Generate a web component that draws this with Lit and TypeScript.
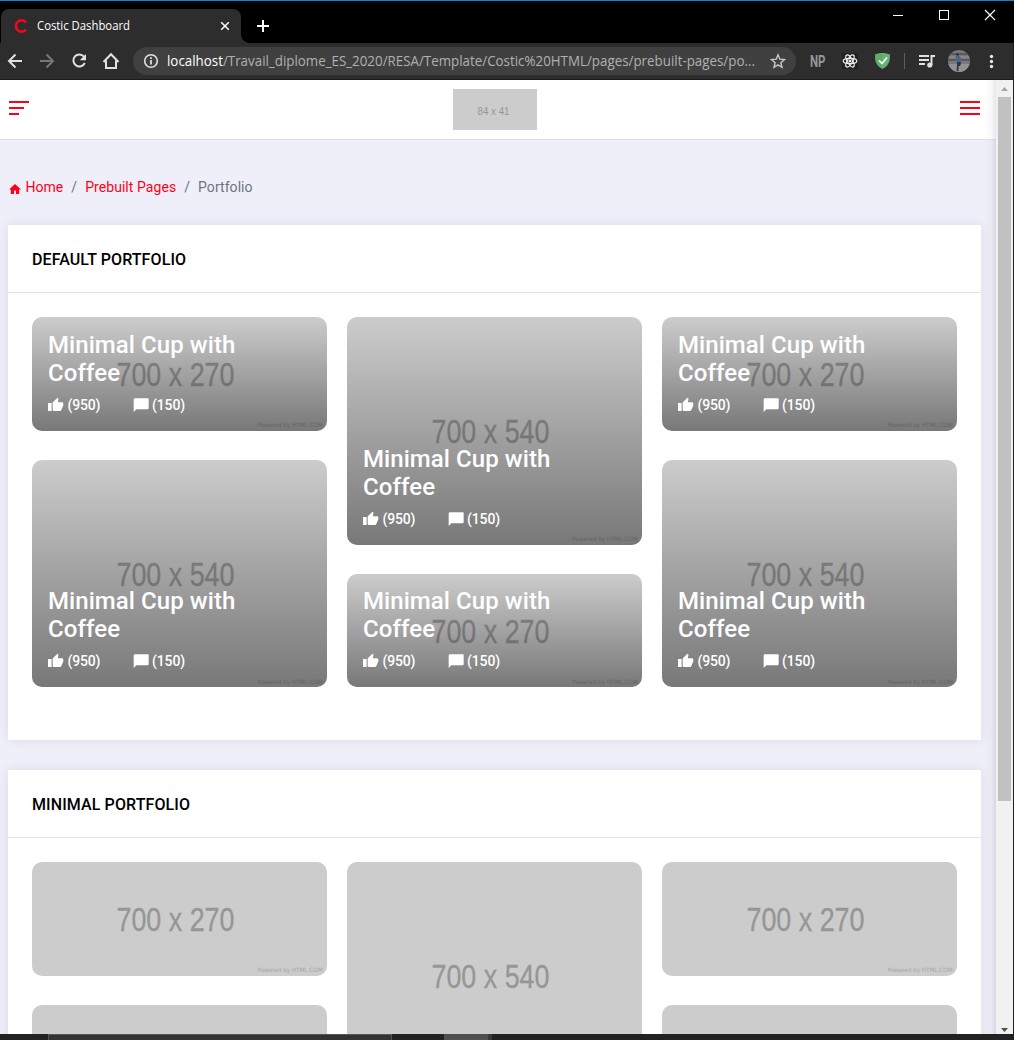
import { LitElement, html, css, svg } from "lit";
import { customElement, property } from "lit/decorators.js";

@customElement("portfolio-tile")
export class PortfolioTile extends LitElement {
  @property({ type: Boolean }) tall = false;
  @property({ type: Boolean }) captioned = false;

  static styles = css`
    :host { display: block; }
    .tile { position: relative; border-radius: 10px; overflow: hidden; background: #ccc; width: 295px; height: 113.8px; }
    .tall { height: 227.57px; }
    .art { display: block; width: 100%; height: 100%; }
    .size { font: 33px "Liberation Sans", sans-serif; fill: #969696; stroke: #969696; stroke-width: .3; }
    .credit { font: 6px "DejaVu Sans", sans-serif; fill: #a6a6a6; }
    .overlay {
      position: absolute; inset: 0; box-sizing: border-box; padding: 0 16px 16px;
      display: flex; flex-direction: column; justify-content: flex-end;
      background: linear-gradient(rgba(0,0,0,0), rgba(0,0,0,.41)); color: #fff;
    }
    .title { margin: 0 0 8px; font: 500 24px/28px Roboto, sans-serif; letter-spacing: .07px; width: 220px; }
    .meta { display: flex; font: 500 14px/20px Roboto, sans-serif; letter-spacing: -.15px; }
    .stat { display: flex; align-items: center; width: 85px; white-space: nowrap; }
    .glyph { width: 16px; height: 16px; margin-right: 3.5px; fill: #fff; flex: none; }
    .stat + .stat { margin-left: -.4px; }
  `;

  render() {
    const h = this.tall ? 227.57 : 113.8;
    const label = this.tall ? "700 x 540" : "700 x 270";
    return html`<div class="tile ${this.tall ? "tall" : ""}">
      <svg class="art" viewBox="0 0 295 ${h}">
        ${svg`<text class="size" x="84.5" y=${h / 2 + 12.5} textLength="118" lengthAdjust="spacingAndGlyphs">${label}</text>
        <text class="credit" x="225.5" y=${h - 3.8} textLength="65" lengthAdjust="spacingAndGlyphs">Powered by HTML.COM</text>`}
      </svg>
      ${this.captioned
        ? html`<div class="overlay">
            <h2 class="title">Minimal Cup with Coffee</h2>
            <div class="meta">
              <span class="stat"><svg class="glyph" viewBox="0 0 24 24"><path d="M23 10a2 2 0 0 0-2-2h-6.320l.96-4.570c.02-.1.030-.21.030-.320 0-.41-.17-.79-.44-1.060L14.170 1 7.590 7.580C7.220 7.950 7 8.450 7 9v10a2 2 0 0 0 2 2h9c.83 0 1.540-.5 1.840-1.220l3.020-7.050c.09-.23.140-.47.140-.73V10M0 21h5.400V9H0v12z"/></svg>(950)</span>
              <span class="stat"><svg class="glyph" viewBox="0 0 24 24"><path d="M22.500 2H3a2 2 0 0 0-2 2v18.500l4-4h17a1.500 1.500 0 0 0 1.500-1.500V3a1 1 0 0 0-1-1z"/></svg>(150)</span>
            </div>
          </div>`
        : ""}
    </div>`;
  }
}

@customElement("portfolio-card")
export class PortfolioCard extends LitElement {
  @property() heading = "";
  @property({ type: Boolean }) captioned = false;

  static styles = css`
    :host { display: block; width: 973px; height: 515px; background: #fff; box-shadow: 0 0 10px rgba(60,50,110,.11); flex: none; }
    .head { height: 65px; border-bottom: 1px solid #e2e3e5; display: flex; align-items: center; padding: 2px 24px 0; }
    .name { margin: 0; font: 500 16px/20px Roboto, sans-serif; letter-spacing: .1px; color: #000; }
    .columns { display: grid; grid-template-columns: repeat(3, 295px); column-gap: 20px; padding: 24px 24px 0; }
    .column { display: flex; flex-direction: column; gap: 29px; }
  `;

  render() {
    const columns = [[false, true], [true, false], [false, true]];
    return html`<div class="head"><h1 class="name">${this.heading}</h1></div>
      <div class="columns">${columns.map(
        (c) => html`<div class="column">${c.map(
          (tall) => html`<portfolio-tile ?tall=${tall} ?captioned=${this.captioned}></portfolio-tile>`
        )}</div>`
      )}</div>`;
  }
}

@customElement("browser-chrome")
export class BrowserChrome extends LitElement {
  static styles = css`
    :host { display: block; height: 80px; background: #000; border-top: 1px solid #1580d3; box-sizing: border-box; font-family: "Open Sans", "Noto Sans", sans-serif; color: #fff; }
    svg { display: block; flex: none; overflow: visible; }
    .line { fill: none; stroke: #dfe1e5; stroke-width: 2; }
    .dim { stroke: #777; }
    .thin { stroke-width: 1.6; }
    .strip { display: flex; height: 42px; padding-left: 1px; }
    .tab { margin-top: 8px; width: 240px; height: 34px; background: #2d2d2d; border-radius: 8px 8px 0 0; display: flex; align-items: center; box-sizing: border-box; padding: 0 11px 0 13px; position: relative; flex: none; }
    .tab::after { content: ""; position: absolute; left: 240px; bottom: 0; width: 8px; height: 8px; background: radial-gradient(circle at 100% 0, transparent 7.5px, #2d2d2d 8px); }
    .label { margin-left: 9px; width: 93px; margin-right: auto; }
    .tabtext { font-size: 12px; fill: #fff; }
    .plus { margin: 19px 0 0 16px; }
    .controls { margin: 9px 19px 0 auto; display: flex; gap: 36px; }
    .bar { height: 37px; background: #2d2d2d; border-bottom: 1px solid #1b1b1b; display: flex; align-items: center; box-sizing: border-box; padding-left: 5px; border-right: 1px solid #1b1b1b; }
    .nav { display: flex; gap: 12px; width: 128px; flex: none; }
    .omni { width: 663px; height: 28px; border-radius: 14px; background: #404040; display: flex; align-items: center; box-sizing: border-box; padding: 0 10px; flex: none; }
    .url { margin-left: 6px; width: 600px; margin-right: auto; }
    .urltext { font-size: 14px; fill: #b0b0b0; }
    .host { fill: #fff; }
    .ext { width: 217px; height: 28px; }
    .np { font-size: 17px; fill: #969696; font-family: Roboto, sans-serif; font-weight: 700; }
  `;

  render() {
    return html`
      <div class="strip">
        <div class="tab">
          <svg width="14" height="16" viewBox="0 0 14 16"><path d="M12 4.400A5.700 5.700 0 1 0 12 11.600" fill="none" stroke="#f5061d" stroke-width="2.600"/></svg>
          <svg class="label" height="18"><text class="tabtext" x="0" y="13" textLength="93" lengthAdjust="spacingAndGlyphs">Costic Dashboard</text></svg>
          <svg width="10" height="10"><path d="M1.200 1.200l7.600 7.600M8.800 1.200l-7.600 7.600" stroke="#fff" stroke-width="1.500"/></svg>
        </div>
        <svg class="plus" width="12" height="12"><path d="M6 0v12M0 6h12" stroke="#fff" stroke-width="2"/></svg>
        <div class="controls">
          <svg width="10" height="10"><path d="M0 5.500h10" stroke="#fff"/></svg>
          <svg width="10" height="10"><rect x=".5" y=".5" width="9" height="9" fill="none" stroke="#fff"/></svg>
          <svg width="10" height="10"><path d="M0 0l10 10M10 0L0 10" stroke="#fff" stroke-width="1.200"/></svg>
        </div>
      </div>
      <div class="bar">
        <div class="nav">
          <svg width="20" height="20"><path class="line" d="M17 10H4.500M10.500 3.500L4 10l6.500 6.500"/></svg>
          <svg width="20" height="20"><path class="line dim" d="M3 10h12.500M9.500 3.500L16 10l-6.500 6.500"/></svg>
          <svg width="20" height="20"><path class="line" d="M15 5.600A6 6 0 1 0 15.800 12"/><path d="M17 3v6.200h-6.200z" fill="#dfe1e5"/></svg>
          <svg width="20" height="20"><path class="line" d="M2.500 11L10 3.200l7.500 7.800M5 9.500V17h10V9.500"/></svg>
        </div>
        <div class="omni">
          <svg width="16" height="16"><circle class="line thin" cx="8" cy="8" r="6.300"/><path d="M8 7v4.600M8 4.200v1.700" stroke="#e8e8e8" stroke-width="1.700"/></svg>
          <svg class="url" height="20"><text class="urltext" x="2" y="15" textLength="588" lengthAdjust="spacingAndGlyphs"><tspan class="host">localhost</tspan>/Travail_diplome_ES_2020/RESA/Template/Costic%20HTML/pages/prebuilt-pages/po...</text></svg>
          <svg width="16" height="16"><path d="M8 1.800l1.800 4.400 4.700.4-3.600 3.100 1.100 4.600L8 11.800l-4 2.500 1.100-4.600L1.500 6.600l4.700-.4z" fill="none" stroke="#c8c8c8" stroke-width="1.400"/></svg>
        </div>
        <svg class="ext" viewBox="796 47 217 28">
          <text class="np" x="810" y="67" textLength="15.500" lengthAdjust="spacingAndGlyphs">NP</text>
          <rect x="842" y="53" width="16" height="16" fill="#222"/>
          <g fill="none" stroke="#eee" stroke-width="1.200">
            <ellipse cx="850" cy="61" rx="6.800" ry="2.600"/>
            <ellipse cx="850" cy="61" rx="6.800" ry="2.600" transform="rotate(60 850 61)"/>
            <ellipse cx="850" cy="61" rx="6.800" ry="2.600" transform="rotate(120 850 61)"/>
          </g>
          <circle cx="850" cy="61" r="1.500" fill="#eee"/>
          <path d="M882.500 53c2.500 0 5.500.6 7.500 1.600 0 6.500-.8 11-7.500 14.400-6.700-3.400-7.500-7.900-7.500-14.400 2-1 5-1.600 7.500-1.600z" fill="#67b279"/>
          <path d="M882.500 53v16c-6.700-3.400-7.500-7.900-7.500-14.400 2-1 5-1.600 7.500-1.600z" fill="#5ba862" opacity=".6"/>
          <path d="M879 60.500l3 3 5-6" fill="none" stroke="#fff" stroke-width="1.700"/>
          <path d="M904.500 53v16" stroke="#5d5d5d"/>
          <path d="M919 56h10M919 60h10M919 64h6" stroke="#dfe1e5" stroke-width="1.800"/>
          <path d="M935 56H931.500V65" fill="none" stroke="#dfe1e5" stroke-width="2"/><circle cx="929.800" cy="65" r="2.600" fill="#dfe1e5"/>
          <clipPath id="avatar"><circle cx="959" cy="61" r="11"/></clipPath>
          <g clip-path="url(#avatar)">
            <rect x="948" y="50" width="22" height="22" fill="#77777c"/>
            <path d="M948 54h22M948 60h22" stroke="#5a5a60" stroke-width="2"/>
            <path d="M948 57h22" stroke="#8c8c90" stroke-width="1.500"/>
            <rect x="948" y="64" width="22" height="8" fill="#929198"/>
            <path d="M955.500 56h4l1.500 2v5h-4z" fill="#47668b"/>
            <path d="M958 62l-.5 9M960 62l-.5 4" stroke="#322d32" stroke-width="1.700"/>
            <circle cx="957.500" cy="54.500" r="1.300" fill="#362922"/>
          </g>
          <g fill="#e5e5e5"><circle cx="991.500" cy="56.500" r="1.700"/><circle cx="991.500" cy="61.500" r="1.700"/><circle cx="991.500" cy="66.500" r="1.700"/></g>
        </svg>
      </div>`;
  }
}

@customElement("app-root")
export class AppRoot extends LitElement {
  static styles = css`
    :host { display: flex; flex-direction: column; width: 1014px; height: 1040px; overflow: hidden; font-family: Roboto, sans-serif; }
    browser-chrome { flex: none; }
    .view { display: flex; height: 954px; border-right: 1px solid #1f1f1f; }
    .page { width: 996px; height: 954px; background: #efeff9; overflow: hidden; display: flex; flex-direction: column; position: relative; }
    .page::after { content: ""; position: absolute; right: 0; top: 0; bottom: 0; width: 12px; background: linear-gradient(to right, rgba(50,50,90,0), rgba(50,50,90,.03) 60%, rgba(50,50,90,.12)); }
    .topbar { flex: none; height: 59px; background: #fff; border-bottom: 1px solid #e1e1e5; display: flex; justify-content: space-between; align-items: flex-start; padding: 0 16px 0 9px; }
    .menu { margin-top: 21px; }
    .logo { margin-top: 9px; display: block; background: #ccc; }
    .logotext { font: 11px "Liberation Sans", sans-serif; fill: #969696; }
    .crumbs { display: flex; flex: none; align-items: center; height: 20px; margin: 37px 0 28px 9px; font-size: 14px; line-height: 20px; letter-spacing: .06px; color: #6c757d; }
    .crumb { color: #ff0018; }
    .home { margin: 4px 4.4px 0 0; fill: #ff0018; }
    .sep { padding: 0 8px; }
    .cards { display: flex; flex-direction: column; gap: 30px; padding-left: 8px; }
    .scroll { width: 17px; background: #f1f1f1; display: flex; flex-direction: column; align-items: center; }
    .arrow { width: 17px; height: 17px; display: block; flex: none; }
    .up { fill: #a3a3a3; }
    .down { fill: #505050; }
    .thumb { width: 13px; height: 704px; background: #c1c1c1; margin-bottom: auto; }
    .task { height: 6px; background: #222; display: flex; padding-left: 48px; }
    .window { width: 344px; box-sizing: border-box; background: #333; border: 1px solid #565656; border-bottom: 0; margin-right: 52px; }
    .active { width: 44px; background: #4e4e4e; border-right: 4px solid #393939; }
  `;

  render() {
    return html`
      <browser-chrome></browser-chrome>
      <div class="view">
        <div class="page">
          <header class="topbar">
            <svg class="menu" width="20" height="14" fill="#ff0018"><path d="M0 0h20v2H0zM0 6h15v2H0zM0 12h10v2H0z"/></svg>
            <svg class="logo" width="84" height="41"><text class="logotext" x="24.500" y="26" textLength="32" lengthAdjust="spacingAndGlyphs">84 x 41</text></svg>
            <svg class="menu" width="20" height="14" fill="#ff0018"><path d="M0 0h20v2H0zM0 6h20v2H0zM0 12h20v2H0z"/></svg>
          </header>
          <nav class="crumbs">
            <svg class="home" width="12" height="10"><path d="M6 0l6 5.400h-1.800V10H7V6.500H5V10H1.800V5.400H0z"/></svg>
            <span class="crumb">Home</span><span class="sep">/</span><span class="crumb">Prebuilt Pages</span><span class="sep">/</span><span>Portfolio</span>
          </nav>
          <main class="cards">
            <portfolio-card heading="DEFAULT PORTFOLIO" captioned></portfolio-card>
            <portfolio-card heading="MINIMAL PORTFOLIO"></portfolio-card>
          </main>
        </div>
        <div class="scroll">
          <svg class="arrow up"><path d="M5 11h7L8.500 7z"/></svg>
          <div class="thumb"></div>
          <svg class="arrow down"><path d="M5 11h7l-3.500 4z"/></svg>
        </div>
      </div>
      <div class="task"><div class="window"></div><div class="active"></div></div>`;
  }
}
